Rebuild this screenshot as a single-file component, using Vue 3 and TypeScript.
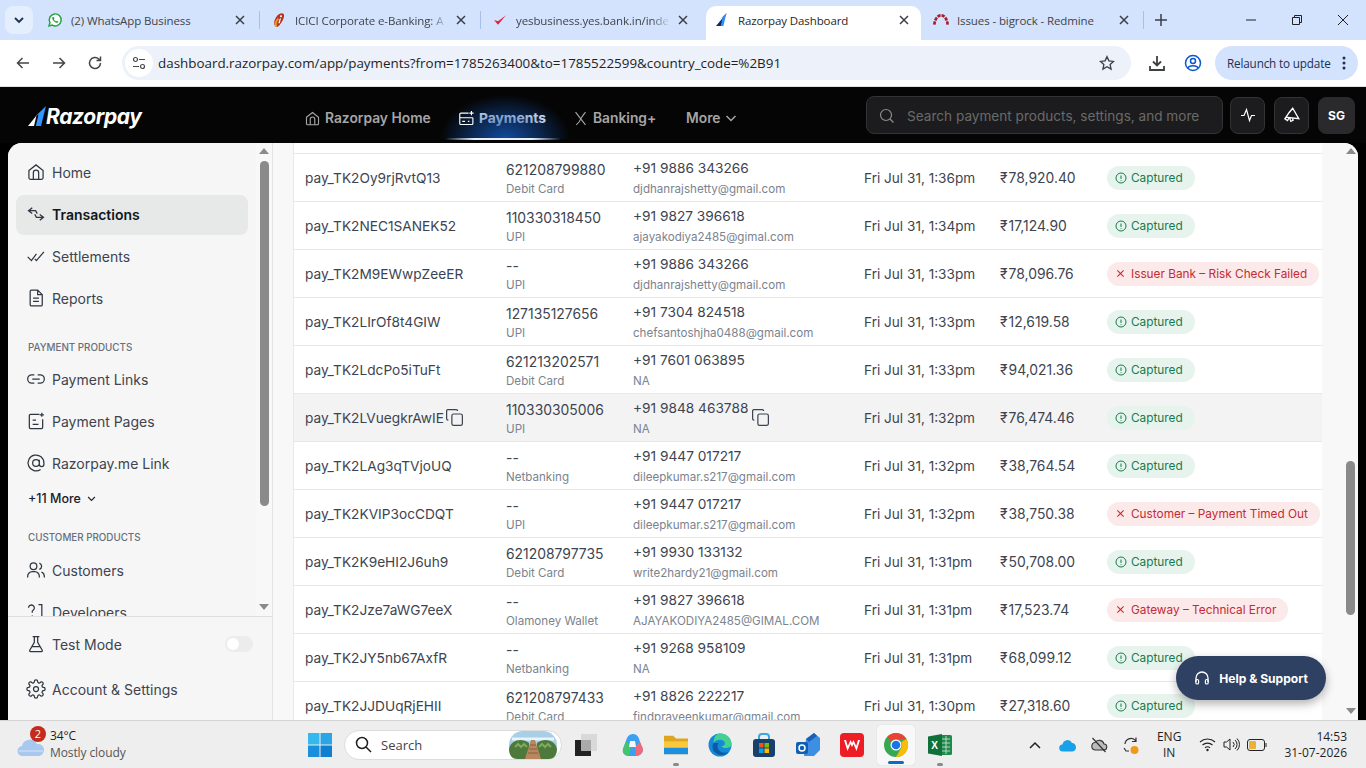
<script setup lang="ts">
interface Tab { title: string; width: number; icon: string; active?: boolean; sep?: boolean; fade?: boolean }
const tabs: Tab[] = [
  { title: '(2) WhatsApp Business', width: 224, icon: 'wa', sep: true },
  { title: 'ICICI Corporate e-Banking: A', width: 221, icon: 'icici', sep: true, fade: true },
  { title: 'yesbusiness.yes.bank.in/inde', width: 222, icon: 'yes', fade: true },
  { title: 'Razorpay Dashboard', width: 215, icon: 'rzp', active: true },
  { title: 'Issues - bigrock - Redmine', width: 222, icon: 'red', sep: true }
]
interface Nav { label: string; d: string; active?: boolean }
const icons = {
  home: 'M3.500 10.200 12 3.500l8.500 6.700V19a1.800 1.800 0 0 1-1.800 1.800H5.300A1.800 1.800 0 0 1 3.500 19ZM8.800 20.800V13a3.200 3.200 0 0 1 6.400 0v7.800',
  tx: 'M7.500 4.500 3 8l4.500 3.500M3 8h8.500l2 3.500M16.500 12.500 21 16l-4.500 3.500M21 16h-8.500l-2-3.500',
  settle: 'M2 13l4.500 4.500 6-8M10.500 15.500l2 2 9-10.500',
  report: 'M5 4a1.500 1.500 0 0 1 1.500-1.500H14L19.500 8v12a1.500 1.500 0 0 1-1.500 1.500H6.500A1.500 1.500 0 0 1 5 20ZM14 2.500V8h5.500M8.500 12h7M8.500 16h7',
  link: 'M10 7H7a5 5 0 0 0 0 10h3M14 7h3a5 5 0 0 1 0 10h-3M7.500 12h9',
  page: 'M16 4H5.500A1.500 1.500 0 0 0 4 5.500v14A1.500 1.500 0 0 0 5.500 21h13a1.500 1.500 0 0 0 1.500-1.500V10M8 11h4M8 16h7M19 2v5M16.500 4.500h5',
  at: 'M16 12a4 4 0 1 1-8 0 4 4 0 0 1 8 0ZM16 8v5.500a2.700 2.700 0 0 0 5.500 0V12a9.500 9.500 0 1 0-4 7.700',
  users: 'M13 7.500a4 4 0 1 1-8 0 4 4 0 0 1 8 0ZM2 21v-1.500A5.500 5.500 0 0 1 7.500 14h3a5.500 5.500 0 0 1 5.500 5.500V21M16 3.700a4 4 0 0 1 0 7.600M22 21v-1.500a5.500 5.500 0 0 0-3.500-5.100',
  dev: 'M3 7a3.500 3.500 0 1 1 5.500 3l-1 1v2M7.500 16v.5M15 3h4v18M15 21h7',
  flask: 'M8 3h8M10 3v7L4.500 19.500A1 1 0 0 0 5.400 21h13.200a1 1 0 0 0 .9-1.500L14 10V3M7.500 15h9',
  gear: 'M12 15a3 3 0 1 0 0-6 3 3 0 0 0 0 6ZM19.400 15a1.700 1.700 0 0 0 .3 1.800l.1.100a2 2 0 1 1-2.800 2.800l-.1-.1a1.700 1.700 0 0 0-2.900 1.200V21a2 2 0 0 1-4 0v-.1a1.700 1.700 0 0 0-2.900-1.200l-.1.100a2 2 0 1 1-2.800-2.800l.1-.1a1.700 1.700 0 0 0-1.200-2.900H3a2 2 0 0 1 0-4h.1a1.700 1.700 0 0 0 1.200-2.900l-.1-.1a2 2 0 1 1 2.800-2.800l.1.100a1.700 1.700 0 0 0 2.900-1.200V3a2 2 0 0 1 4 0v.1a1.700 1.700 0 0 0 2.900 1.200l.1-.1a2 2 0 1 1 2.800 2.800l-.1.100a1.700 1.700 0 0 0 1.200 2.900h.1a2 2 0 0 1 0 4h-.1a1.700 1.700 0 0 0-1.500 1Z',
  payments: 'M15 4.500H4A1.500 1.500 0 0 0 2.500 6v13A1.500 1.500 0 0 0 4 20.500h15.500A1.500 1.500 0 0 0 21 19v-8M2.500 11H21M6 16h4M14 16h2M19 1.500v6M16 4.500h6',
  banking: 'M5 3l14 18M19 3c-3 4-5.500 7-6.500 9.500-1 2.500-3.500 6-6.500 8.500'
}
const mainNav: Nav[] = [
  { label: 'Home', d: icons.home },
  { label: 'Transactions', d: icons.tx, active: true },
  { label: 'Settlements', d: icons.settle },
  { label: 'Reports', d: icons.report }
]
const payProducts: Nav[] = [
  { label: 'Payment Links', d: icons.link },
  { label: 'Payment Pages', d: icons.page },
  { label: 'Razorpay.me Link', d: icons.at }
]
const custProducts: Nav[] = [
  { label: 'Customers', d: icons.users },
  { label: 'Developers', d: icons.dev }
]
interface Row { id: string; ref: string; method: string; phone: string; mail: string; date: string; amount: string; status: string; fail?: boolean; hover?: boolean }
const C = 'Captured'
const rows: Row[] = [
  { id: 'pay_TK2Oy9rjRvtQ13', ref: '621208799880', method: 'Debit Card', phone: '+91 9886 343266', mail: 'djdhanrajshetty@gmail.com', date: 'Fri Jul 31, 1:36pm', amount: '78,920.40', status: C },
  { id: 'pay_TK2NEC1SANEK52', ref: '110330318450', method: 'UPI', phone: '+91 9827 396618', mail: 'ajayakodiya2485@gimal.com', date: 'Fri Jul 31, 1:34pm', amount: '17,124.90', status: C },
  { id: 'pay_TK2M9EWwpZeeER', ref: '--', method: 'UPI', phone: '+91 9886 343266', mail: 'djdhanrajshetty@gmail.com', date: 'Fri Jul 31, 1:33pm', amount: '78,096.76', status: 'Issuer Bank – Risk Check Failed', fail: true },
  { id: 'pay_TK2LIrOf8t4GIW', ref: '127135127656', method: 'UPI', phone: '+91 7304 824518', mail: 'chefsantoshjha0488@gmail.com', date: 'Fri Jul 31, 1:33pm', amount: '12,619.58', status: C },
  { id: 'pay_TK2LdcPo5iTuFt', ref: '621213202571', method: 'Debit Card', phone: '+91 7601 063895', mail: 'NA', date: 'Fri Jul 31, 1:33pm', amount: '94,021.36', status: C },
  { id: 'pay_TK2LVuegkrAwIE', ref: '110330305006', method: 'UPI', phone: '+91 9848 463788', mail: 'NA', date: 'Fri Jul 31, 1:32pm', amount: '76,474.46', status: C, hover: true },
  { id: 'pay_TK2LAg3qTVjoUQ', ref: '--', method: 'Netbanking', phone: '+91 9447 017217', mail: 'dileepkumar.s217@gmail.com', date: 'Fri Jul 31, 1:32pm', amount: '38,764.54', status: C },
  { id: 'pay_TK2KVIP3ocCDQT', ref: '--', method: 'UPI', phone: '+91 9447 017217', mail: 'dileepkumar.s217@gmail.com', date: 'Fri Jul 31, 1:32pm', amount: '38,750.38', status: 'Customer – Payment Timed Out', fail: true },
  { id: 'pay_TK2K9eHI2J6uh9', ref: '621208797735', method: 'Debit Card', phone: '+91 9930 133132', mail: 'write2hardy21@gmail.com', date: 'Fri Jul 31, 1:31pm', amount: '50,708.00', status: C },
  { id: 'pay_TK2Jze7aWG7eeX', ref: '--', method: 'Olamoney Wallet', phone: '+91 9827 396618', mail: 'AJAYAKODIYA2485@GIMAL.COM', date: 'Fri Jul 31, 1:31pm', amount: '17,523.74', status: 'Gateway – Technical Error', fail: true },
  { id: 'pay_TK2JY5nb67AxfR', ref: '--', method: 'Netbanking', phone: '+91 9268 958109', mail: 'NA', date: 'Fri Jul 31, 1:31pm', amount: '68,099.12', status: C },
  { id: 'pay_TK2JJDUqRjEHII', ref: '621208797433', method: 'Debit Card', phone: '+91 8826 222217', mail: 'findpraveenkumar@gmail.com', date: 'Fri Jul 31, 1:30pm', amount: '27,318.60', status: C }
]
</script>

<template>
  <div class="screen">
    <!-- tab strip -->
    <div class="tabstrip">
      <div class="tab-search"><svg width="12" height="12" viewBox="0 0 12 12"><path d="M2 4l4 4 4-4" fill="none" stroke="#1f2f4d" stroke-width="1.800"/></svg></div>
      <div v-for="t in tabs" :key="t.title" class="tab" :class="{ active: t.active, sep: t.sep }" :style="{ width: t.width + 'px' }">
        <svg v-if="t.icon === 'wa'" class="fav" viewBox="0 0 24 24"><path d="M3 21l1.400-5A9 9 0 1 1 8 19.700Z" fill="#fff" stroke="#25a244" stroke-width="2.200"/><path d="M8.500 7.500c-1 1-1 2.500.3 4.500s3.500 4 5.500 4.300c1.500.2 2.500-.8 2.700-2l-2.300-1.200-1 1.200c-1.500-.6-2.700-1.800-3.500-3.300l.9-1.100-1-2.400Z" fill="#25a244"/></svg>
        <svg v-else-if="t.icon === 'icici'" class="fav" viewBox="0 0 24 24"><path d="M8 22C3 20 4 12 9 6c3-4 8-5 10-3 2 3-1 10-5 15-2 3-4 5-6 4Z" fill="#b5361c"/><path d="M8 22c-2-4 0-9 3-12" fill="none" stroke="#f0962a" stroke-width="3"/><path d="M13 10l2-1-2 8h-2Z" fill="#fff"/><circle cx="15" cy="6.500" r="1.500" fill="#fff"/></svg>
        <svg v-else-if="t.icon === 'yes'" class="fav" viewBox="0 0 24 24"><path d="M3 12l6 7L21 5 9 14Z" fill="#e3213f"/></svg>
        <svg v-else-if="t.icon === 'rzp'" class="fav" viewBox="0 0 24 24"><path d="M14 8 11 21H3Z" fill="#0b2a6b"/><path d="M19 1l-5 20h-4l3-13-4 3Z" fill="#2f8cf0"/></svg>
        <svg v-else class="fav" viewBox="0 0 24 24"><path d="M2 19C3 9 8 5 12 5s9 4 10 14" fill="none" stroke="#a81d2a" stroke-width="4" stroke-dasharray="5 1.500"/></svg>
        <span class="tab-title" :class="{ fade: t.fade }">{{ t.title }}</span>
        <svg class="tab-x" width="10" height="10" viewBox="0 0 10 10"><path d="M1 1l8 8M9 1 1 9" stroke="#3a3f47" stroke-width="1.500"/></svg>
      </div>
      <svg class="plus" width="14" height="14" viewBox="0 0 14 14"><path d="M7 1v12M1 7h12" stroke="#3a3f47" stroke-width="1.500"/></svg>
      <div class="winctl">
        <svg width="12" height="12" viewBox="0 0 12 12"><path d="M1 6h10" stroke="#222" stroke-width="1"/></svg>
        <svg width="12" height="12" viewBox="0 0 12 12"><path d="M1.500 3.500h7v7h-7ZM3.500 3.500v-2h7v7h-2" fill="none" stroke="#222" stroke-width="1"/></svg>
        <svg width="12" height="12" viewBox="0 0 12 12"><path d="M1 1l10 10M11 1 1 11" stroke="#222" stroke-width="1"/></svg>
      </div>
    </div>

    <!-- toolbar -->
    <div class="toolbar">
      <svg class="tb-ic" viewBox="0 0 16 16"><path d="M14 8H2.500M7.500 3 2.500 8l5 5" fill="none" stroke="#444746" stroke-width="1.500"/></svg>
      <svg class="tb-ic" viewBox="0 0 16 16"><path d="M2 8h11.500M8.500 3l5 5-5 5" fill="none" stroke="#444746" stroke-width="1.500"/></svg>
      <svg class="tb-ic" viewBox="0 0 16 16"><path d="M13.500 8a5.500 5.500 0 1 1-1.700-4L13.500 5.500M13.500 1.500v4h-4" fill="none" stroke="#444746" stroke-width="1.500"/></svg>
      <div class="urlbar">
        <span class="tune"><svg width="14" height="14" viewBox="0 0 14 14"><circle cx="3.500" cy="3.500" r="2" fill="none" stroke="#444746" stroke-width="1.200"/><path d="M7 3.500h6M1 10.500h6" stroke="#444746" stroke-width="1.200"/><circle cx="10.500" cy="10.500" r="2" fill="none" stroke="#444746" stroke-width="1.200"/></svg></span>
        <span class="url">dashboard.razorpay.com/app/payments?from=1785263400&amp;to=1785522599&amp;country_code=%2B91</span>
        <svg class="star" width="16" height="16" viewBox="0 0 24 24"><path d="M12 2.500l2.900 6.300 6.900.8-5.100 4.700 1.400 6.800-6.100-3.500-6.100 3.500 1.400-6.800L2.200 9.600l6.900-.8Z" fill="none" stroke="#3c4043" stroke-width="2"/></svg>
      </div>
      <svg class="dl" width="18" height="18" viewBox="0 0 18 18"><path d="M9 2v9M5 7.500 9 11.500l4-4M2 12v4h14v-4" fill="none" stroke="#3c4043" stroke-width="1.800"/></svg>
      <svg class="prof" width="18" height="18" viewBox="0 0 18 18"><circle cx="9" cy="9" r="7.500" fill="none" stroke="#0b57d0" stroke-width="1.500"/><circle cx="9" cy="7" r="2.500" fill="none" stroke="#0b57d0" stroke-width="1.500"/><path d="M4 14c1-3 9-3 10 0" fill="none" stroke="#0b57d0" stroke-width="1.500"/></svg>
      <div class="relaunch"><span>Relaunch to update</span><svg width="4" height="14" viewBox="0 0 4 14"><circle cx="2" cy="2" r="1.500" fill="#1f2f4d"/><circle cx="2" cy="7" r="1.500" fill="#1f2f4d"/><circle cx="2" cy="12" r="1.500" fill="#1f2f4d"/></svg></div>
    </div>

    <!-- app -->
    <div class="app">
      <header class="topnav">
        <div class="logo">
          <svg width="18" height="20" viewBox="0 0 18 20"><path d="M8.500 9.500 6 20H0Z" fill="#fff"/><path d="M18 0 13 20H7.800l2.700-11.500-4 2.700Z" fill="#3395ff"/></svg>
          <span>Razorpay</span>
        </div>
        <div class="nav-links">
          <div class="nl w1"><svg class="nli" viewBox="0 0 24 24"><path :d="icons.home"/></svg>Razorpay Home</div>
          <div class="nl on w2"><svg class="nli" viewBox="0 0 24 24"><path :d="icons.payments"/></svg>Payments</div>
          <div class="nl w3"><svg class="nli" viewBox="0 0 24 24"><path :d="icons.banking"/></svg>Banking+</div>
          <div class="nl">More <svg class="chev" viewBox="0 0 12 12"><path d="M1.500 4 6 8.500 10.500 4"/></svg></div>
        </div>
        <div class="top-right">
          <div class="search">
            <svg width="16" height="16" viewBox="0 0 16 16"><circle cx="7" cy="7" r="5.500" fill="none" stroke="#8c8c8c" stroke-width="1.200"/><path d="M11 11l3.500 3.500" stroke="#8c8c8c" stroke-width="1.200"/></svg>
            <span>Search payment products, settings, and more</span>
          </div>
          <div class="sq"><svg width="16" height="16" viewBox="0 0 16 16"><path d="M1 8.500h3l2.500-6 3 11 2-5h3.500" fill="none" stroke="#fff" stroke-width="1.200"/></svg></div>
          <div class="sq"><svg width="18" height="18" viewBox="0 0 24 24"><path d="M13 3 21 17 4 15l4-6ZM4 15l-1.500 2L6 19.500 8 16M9 16.500l1.500 4 3-1.500-1-3" fill="none" stroke="#fff" stroke-width="1.800"/></svg></div>
          <div class="sq avatar">SG</div>
        </div>
      </header>

      <div class="body">
        <aside class="sidebar">
          <div class="side-top">
            <div class="side-scroll">
              <div class="side-inner">
                <a v-for="n in mainNav" :key="n.label" class="item" :class="{ cur: n.active }"><svg class="ii" viewBox="0 0 24 24"><path :d="n.d"/></svg>{{ n.label }}</a>
                <div class="grp first">PAYMENT PRODUCTS</div>
                <a v-for="n in payProducts" :key="n.label" class="item"><svg class="ii" viewBox="0 0 24 24"><path :d="n.d"/></svg>{{ n.label }}</a>
                <div class="more">+11 More <svg width="9" height="9" viewBox="0 0 12 12"><path d="M1.500 4 6 8.500 10.500 4" fill="none" stroke="#222" stroke-width="1.500"/></svg></div>
                <div class="grp second">CUSTOMER PRODUCTS</div>
                <a v-for="n in custProducts" :key="n.label" class="item"><svg class="ii" viewBox="0 0 24 24"><path :d="n.d"/></svg>{{ n.label }}</a>
              </div>
            </div>
            <div class="vbar side-bar">
              <i class="arrow up"></i>
              <b class="thumb"></b>
              <i class="arrow down"></i>
            </div>
          </div>
          <div class="side-bottom">
            <a class="item plain"><svg class="ii" viewBox="0 0 24 24"><path :d="icons.flask"/></svg>Test Mode<span class="toggle"><em></em></span></a>
            <a class="item plain"><svg class="ii" viewBox="0 0 24 24"><path :d="icons.gear"/></svg>Account &amp; Settings</a>
          </div>
        </aside>

        <div class="gutter"></div>

        <main class="table">
          <div class="rows">
            <div class="row cut">
              <div class="c-id"></div>
              <div class="w-ref"><span class="sub peek">UPI</span></div>
              <div class="w-phone"><span class="sub peek">NA</span></div>
            </div>
            <div v-for="r in rows" :key="r.id" class="row" :class="{ hover: r.hover }">
              <div class="c-id">{{ r.id }}<svg v-if="r.hover" class="copy" viewBox="0 0 24 24"><path d="M9 10a2 2 0 0 1 2-2h8a2 2 0 0 1 2 2v9a2 2 0 0 1-2 2h-8a2 2 0 0 1-2-2ZM5 15H4.500A1.500 1.500 0 0 1 3 13.500v-9A1.500 1.500 0 0 1 4.500 3H14a1.500 1.500 0 0 1 1.500 1.500"/></svg></div>
              <div class="stack w-ref"><span class="main-t t-ref">{{ r.ref }}</span><span class="sub">{{ r.method }}</span></div>
              <div class="stack w-phone">
                <span class="main-t t-ph">{{ r.phone }}</span><span class="sub">{{ r.mail }}</span>
                <svg v-if="r.hover" class="copy over" viewBox="0 0 24 24"><path d="M9 10a2 2 0 0 1 2-2h8a2 2 0 0 1 2 2v9a2 2 0 0 1-2 2h-8a2 2 0 0 1-2-2ZM5 15H4.500A1.500 1.500 0 0 1 3 13.500v-9A1.500 1.500 0 0 1 4.500 3H14a1.500 1.500 0 0 1 1.500 1.500"/></svg>
              </div>
              <div class="w-date">{{ r.date }}</div>
              <div class="w-amt"><span class="rupee">₹</span>{{ r.amount }}</div>
              <div class="pill" :class="r.fail ? 'bad' : 'good'">
                <svg v-if="r.fail" width="9" height="9" viewBox="0 0 10 10"><path d="M1.500 1.500l7 7M8.500 1.500l-7 7" stroke="#c62a33" stroke-width="1.200"/></svg>
                <svg v-else width="12" height="12" viewBox="0 0 12 12"><circle cx="6" cy="6" r="5" fill="none" stroke="#177a4b" stroke-width="1"/><path d="M6 3.500v3.500M6 8.300v.8" stroke="#177a4b" stroke-width="1"/></svg>
                <span>{{ r.status }}</span>
              </div>
            </div>
          </div>
        </main>

        <div class="gutter right"></div>
        <div class="vbar main-bar">
          <i class="arrow up"></i>
          <b class="thumb"></b>
          <i class="arrow down"></i>
        </div>

        <div class="help">
          <svg width="16" height="16" viewBox="0 0 16 16"><path d="M2 12V8a6 6 0 0 1 12 0v4" fill="none" stroke="#fff" stroke-width="1.300"/><rect x="1.800" y="9.500" width="2.800" height="4.500" rx="1.300" fill="none" stroke="#fff" stroke-width="1.200"/><rect x="11.400" y="9.500" width="2.800" height="4.500" rx="1.300" fill="none" stroke="#fff" stroke-width="1.200"/></svg>
          <span>Help &amp; Support</span>
        </div>
      </div>
    </div>

    <!-- taskbar -->
    <footer class="taskbar">
      <div class="weather">
        <div class="cloud">
          <svg width="28" height="26" viewBox="0 0 28 26"><path d="M6 24a5 5 0 0 1-1-10 8 8 0 0 1 15-2 6 6 0 0 1 2 12Z" fill="#a9c8ef"/><path d="M2 19h24" stroke="#d6e6f8" stroke-width="1"/></svg>
          <span class="badge">2</span>
        </div>
        <div class="wtxt"><span>34°C</span><span class="gray">Mostly cloudy</span></div>
      </div>
      <div class="center">
        <svg class="winlogo" width="24" height="24" viewBox="0 0 24 24"><rect width="11.500" height="11.500" fill="#35b8ee"/><rect x="12.500" width="11.500" height="11.500" fill="#2aa5e6"/><rect y="12.500" width="11.500" height="11.500" fill="#1a8fdc"/><rect x="12.500" y="12.500" width="11.500" height="11.500" fill="#0f7fd0"/></svg>
        <div class="tsearch">
          <svg width="17" height="17" viewBox="0 0 17 17"><circle cx="7" cy="7" r="5.500" fill="none" stroke="#1f1f1f" stroke-width="1.500"/><path d="M11 11l5 5" stroke="#1f1f1f" stroke-width="1.500"/></svg>
          <span>Search</span>
          <svg class="pic" width="48" height="28" viewBox="0 0 48 28"><rect width="48" height="28" rx="14" fill="#a8cfe8"/><path d="M3 8h42" stroke="#e8f3fa" stroke-width="3"/><path d="M0 18C2 8 14 7 20 12v16H8C3 28 0 24 0 18ZM48 18C46 8 34 7 28 12v16h12c5 0 8-4 8-10Z" fill="#4d7a3c"/><path d="M6 16l3-3 3 3 3-3 3 3M30 16l3-3 3 3 3-3 3 3" stroke="#7fa85a" stroke-width="2" fill="none"/><path d="M22 9h4l6 19H16Z" fill="#b9875f"/><path d="M21 14h6M20 18h8M19 22h10" stroke="#8c5f3f"/></svg>
        </div>
        <svg class="ti task" viewBox="0 0 24 24"><rect x="7" y="1" width="16" height="17" fill="#d9d9d9"/><rect x="1" y="7" width="16" height="16" fill="#222"/><rect x="7" y="7" width="10" height="11" fill="#aaa"/></svg>
        <svg class="ti" viewBox="0 0 24 24"><path d="M13 1c4 0 6 3 7 8l3 7c0 4-3 7-7 7H9c-4 0-7-3-6-7l3-8c1-4 3-7 7-7Z" fill="#3aa0f0"/><path d="M9 23c-4 0-7-3-6-7l3-8 5 6-2 9Z" fill="#43c46f"/><path d="M16 23c4 0 7-3 7-7l-3-7-5 5 1 9Z" fill="#f06a7a"/><path d="M10 8h5l1 6h-7Z" fill="#f7f7f7"/></svg>
        <span class="with-dot"><svg class="ti" viewBox="0 0 26 24"><path d="M0 2h10l3 3h13v4H0Z" fill="#e0a520"/><path d="M0 8h26v14H0Z" fill="#f9c93b"/><path d="M0 15h26v7H0Z" fill="#1d8fe0"/></svg><i class="dot"></i></span>
        <svg class="ti" viewBox="0 0 24 24"><circle cx="12" cy="12" r="11.500" fill="#1688d8"/><path d="M12 .5c7 0 11.500 5 11.500 10.500 0 3-3 4-6 4-3.500 0-4-2-4-2 3 0 4-2 3-4-2-3-8-3-11 1C6 4 8 .5 12 .5Z" fill="#43d18f"/><path d="M5.500 10c-3 5 1 12 8 12 3 0 5-1 7-3-5 2-11 0-11-6 0-1 .5-2 1-3Z" fill="#0c59a4"/></svg>
        <svg class="ti" viewBox="0 0 24 24"><path d="M7 7V4a3 3 0 0 1 3-3h4a3 3 0 0 1 3 3v3" fill="none" stroke="#3aa7e0" stroke-width="2"/><rect x="1" y="6" width="22" height="18" rx="3" fill="#19406b"/><rect x="7" y="10" width="4.500" height="4.500" fill="#f25022"/><rect x="12.500" y="10" width="4.500" height="4.500" fill="#7fba00"/><rect x="7" y="15.500" width="4.500" height="4.500" fill="#00a4ef"/><rect x="12.500" y="15.500" width="4.500" height="4.500" fill="#ffb900"/></svg>
        <svg class="ti" viewBox="0 0 24 24"><path d="M10 6 18 0l6 5v12l-6 6H8Z" fill="#3c8fe4"/><path d="M10 6l8-6 3 3-8 6Z" fill="#1d5fb5"/><rect x="0" y="9" width="12" height="12" rx="2" fill="#0f5fb3"/><circle cx="6" cy="15" r="3" fill="none" stroke="#fff" stroke-width="1.500"/></svg>
        <svg class="ti" viewBox="0 0 24 24"><rect width="24" height="24" rx="4" fill="#ee1c25"/><path d="M4 7l3.500 11 3-7 1.500 3 1.500-3 3 7L20 7l-2 0-1.800 6-2.700-6L12 10l-1.500-3-2.700 6L6 7Z" fill="#fff"/></svg>
        <span class="chrome-wrap"><svg class="ti" viewBox="0 0 24 24"><circle cx="12" cy="12" r="12" fill="#34a853"/><path d="M12 0a12 12 0 0 1 10.400 6H12a6 6 0 0 0-5.200 3L3.500 3.500A12 12 0 0 1 12 0Z" fill="#ea4335"/><path d="M22.400 6A12 12 0 0 1 12 24l5.200-9a6 6 0 0 0 0-6Z" fill="#fbbc04"/><circle cx="12" cy="12" r="5.500" fill="#fff"/><circle cx="12" cy="12" r="4.300" fill="#1a73e8"/></svg><i class="active-bar"></i></span>
        <span class="with-dot"><svg class="ti" viewBox="0 0 24 24"><rect x="8" y="2" width="16" height="20" rx="1.500" fill="#1f8a4c"/><path d="M14 6h8M14 10h8M14 14h8M14 18h8M18 3v18" stroke="#d6eadf" stroke-width=".8"/><path d="M0 3.500 14 1v22L0 20.500Z" fill="#10703a"/><text x="3.200" y="16" font-size="10" font-weight="700" fill="#fff" font-family="Liberation Sans, sans-serif">X</text></svg><i class="dot"></i></span>
      </div>
      <div class="tray">
        <svg class="t-chev" width="14" height="10" viewBox="0 0 14 10"><path d="M2 8l5-5 5 5" fill="none" stroke="#222" stroke-width="1.500"/></svg>
        <svg class="t-one" width="18" height="14" viewBox="0 0 18 14"><path d="M4 13.500a3.500 3.500 0 0 1-.5-7A5 5 0 0 1 13 5a4.300 4.300 0 0 1 .5 8.500Z" fill="#18a0e8"/></svg>
        <svg class="t-off" width="18" height="18" viewBox="0 0 18 18"><path d="M5 14h8.500a3 3 0 0 0 .5-6 5 5 0 0 0-9-1.500A3.800 3.800 0 0 0 5 14Z" fill="#bbb" stroke="#333" stroke-width="1.100"/><path d="M2.500 2l13 14" stroke="#333" stroke-width="1.200"/></svg>
        <svg class="t-off" width="18" height="20" viewBox="0 0 18 20"><path d="M3 9a6 6 0 0 1 10-4l1 1M14 2.500V6.500h-4M2 13l2 3h3" fill="none" stroke="#333" stroke-width="1.200"/><circle cx="12.500" cy="15" r="4" fill="#f09a1a"/></svg>
        <div class="lang"><span>ENG</span><span>IN</span></div>
        <svg class="t-wifi" width="17" height="15" viewBox="0 0 17 15"><path d="M1 5a11 11 0 0 1 15 0M3.500 8a7.500 7.500 0 0 1 10 0M6 10.800a3.500 3.500 0 0 1 5 0" fill="none" stroke="#222" stroke-width="1.100"/><circle cx="8.500" cy="13" r="1.200" fill="#222"/></svg>
        <svg class="t-snd" width="17" height="15" viewBox="0 0 17 15"><path d="M1 5h2.500L7 2v11L3.500 10H1ZM10 5a3.500 3.500 0 0 1 0 5M12 3a6 6 0 0 1 0 9M14 1.500a8.500 8.500 0 0 1 0 12" fill="none" stroke="#222" stroke-width="1"/></svg>
        <svg class="t-bat" width="20" height="12" viewBox="0 0 20 12"><rect x=".5" y=".5" width="17" height="11" rx="2.500" fill="none" stroke="#222"/><rect x="2" y="2" width="7" height="8" rx="1" fill="#e9b23a"/><path d="M19 4v4" stroke="#222"/></svg>
        <div class="clock"><span>14:53</span><span>31-07-2026</span></div>
      </div>
    </footer>
  </div>
</template>

<style>
html, body { margin: 0; background: #000; overflow: hidden; }
</style>

<style scoped>
.screen { width: 1366px; height: 768px; display: flex; flex-direction: column; overflow: hidden; font-family: Inter, "Liberation Sans", sans-serif; }

/* tabs */
.tabstrip { height: 40px; background: #d3e3fd; display: flex; align-items: flex-end; padding-left: 5px; font-family: "Open Sans", "Noto Sans", sans-serif; flex: none; }
.tab-search { width: 28px; height: 28px; margin: 0 6px 6px 0; border-radius: 8px; background: #e4eefd; display: flex; align-items: center; justify-content: center; }
.tab { height: 34px; box-sizing: border-box; display: flex; align-items: center; padding: 0 18px 6px 8px; gap: 8px; font-size: 11.500px; color: #3f444a; position: relative; flex: none; letter-spacing: -.1px; }
.tab.active { background: #fff; border-radius: 10px 10px 0 0; color: #1f1f1f; padding-right: 12px; margin-right: 4px; }
.tab.sep::after { content: ""; position: absolute; right: 3px; top: 5px; height: 18px; width: 1px; background: #a8c0e6; }
.fav { width: 16px; height: 16px; flex: none; }
.tab-title { flex: 1; white-space: nowrap; overflow: hidden; min-width: 0; }
.tab-title.fade { -webkit-mask-image: linear-gradient(90deg, #000 calc(100% - 18px), transparent); mask-image: linear-gradient(90deg, #000 calc(100% - 18px), transparent); }
.tab-x { flex: none; }
.plus { margin: 0 0 13px 7px; flex: none; }
.winctl { margin-left: auto; display: flex; gap: 34px; padding: 0 17px 14px 0; }

/* toolbar */
.toolbar { height: 47px; background: #fff; display: flex; align-items: center; padding: 0 0 0 15px; border-bottom: 1px solid #e2e2e2; flex: none; box-sizing: border-box; font-family: "Open Sans", "Noto Sans", sans-serif; }
.tb-ic { width: 16px; height: 16px; margin-right: 20px; flex: none; }
.urlbar { width: 1009px; height: 34px; margin-left: -1px; background: #ecf1fa; border-radius: 17px; display: flex; align-items: center; flex: none; box-sizing: border-box; padding: 0 16px 0 3px; }
.tune { width: 28px; height: 28px; border-radius: 50%; background: #fff; display: flex; align-items: center; justify-content: center; margin-right: 5px; }
.url { font-size: 13.400px; color: #1f1f1f; flex: 1; white-space: nowrap; }
.star { flex: none; }
.dl { margin-left: 17px; flex: none; }
.prof { margin-left: 18px; flex: none; }
.relaunch { margin-left: 13px; width: 143px; height: 34px; border-radius: 17px; background: #d3e3fd; display: flex; align-items: center; gap: 11px; padding-left: 12px; box-sizing: border-box; font-size: 11.700px; color: #1f2f4d; white-space: nowrap; flex: none; letter-spacing: -.15px; }

/* app */
.app { flex: 1; min-height: 0; background: #000; display: flex; flex-direction: column; }
.topnav { height: 56px; flex: none; display: flex; align-items: center; background: #050505; position: relative; }
.logo { display: flex; align-items: center; margin-left: 28px; width: 277px; flex: none; padding-top: 2px; box-sizing: border-box; height: 26px; }
.logo span { font-size: 21px; font-weight: 700; font-style: italic; color: #fff; letter-spacing: -.4px; }
.nav-links { display: flex; align-items: center; height: 100%; }
.nl { display: flex; align-items: center; gap: 4px; font-size: 13.800px; font-weight: 600; color: #a6a6a6; white-space: nowrap; height: 100%; box-sizing: border-box; padding-top: 6px; position: relative; }
.w1 { width: 154px; }
.w2 { width: 114px; }
.w3 { width: 113px; }
.nl.on { color: #fff; font-weight: 700; }
.nl.on::before { content: ""; position: absolute; left: -19px; top: 0; width: 130px; height: 52px; background: radial-gradient(ellipse 50% 85% at 50% 100%, rgba(18, 78, 165, .95), rgba(18, 78, 165, .45) 55%, rgba(18, 78, 165, 0) 100%); }
.nl.on::after { content: ""; position: absolute; left: -14px; width: 116px; top: 51px; height: 1.500px; background: linear-gradient(90deg, rgba(255, 255, 255, 0), #e6eefb 25%, #e6eefb 75%, rgba(255, 255, 255, 0)); }
.nli { width: 17px; height: 17px; margin-left: -1px; fill: none; stroke: currentColor; stroke-width: 1.600; position: relative; flex: none; }
.chev { width: 12px; height: 12px; fill: none; stroke: #a6a6a6; stroke-width: 1.500; margin-left: 1px; }
.top-right { margin-left: auto; display: flex; align-items: center; padding-right: 11px; }
.search { width: 357px; height: 38px; box-sizing: border-box; background: #1c1c1e; border: 1px solid #333; border-radius: 8px; display: flex; align-items: center; gap: 12px; padding: 1px 0 0 12px; font-size: 13.600px; color: #6a6a6a; margin-right: 7px; white-space: nowrap; }
.sq { width: 35px; height: 37px; box-sizing: border-box; border: 1px solid #333; background: #1c1c1e; border-radius: 8px; display: flex; align-items: center; justify-content: center; margin-right: 9px; }
.sq:last-child { margin-right: 0; width: 37px; background: #2a2a2c; border-color: #2a2a2c; }
.avatar { color: #fff; font-size: 12px; font-weight: 700; }

.body { flex: 1; min-height: 0; display: flex; position: relative; margin: 0 8px; background: #fff; border-radius: 14px 14px 0 0; overflow: hidden; }
.sidebar { width: 265px; flex: none; background: #f6f6f6; border-right: 1px solid #e3e3e3; display: flex; flex-direction: column; box-sizing: border-box; }
.side-top { height: 473px; display: flex; flex: none; border-bottom: 1px solid #dedede; overflow: hidden; }
.side-scroll { width: 248px; flex: none; overflow: hidden; }
.side-inner { padding: 10px 8px 0; }
.item { display: flex; align-items: center; height: 40px; margin-bottom: 2px; padding: 0 0 2px 10px; gap: 6px; border-radius: 8px; font-size: 14px; color: #3d4450; position: relative; box-sizing: border-box; }
.item.cur { background: #e7e8e8; color: #0f1720; font-weight: 600; }
.ii { width: 20px; height: 20px; fill: none; stroke: #2f3640; stroke-width: 1.500; flex: none; }
.grp { font-size: 9.800px; color: #67707c; padding-left: 12px; height: 12px; line-height: 12px; font-weight: 500; }
.grp.first { margin: 23px 0 6px; }
.grp.second { margin: 0 0 7px; }
.more { padding-left: 12px; display: flex; align-items: center; gap: 6px; height: 14px; font-size: 12.500px; font-weight: 500; color: #1a2029; margin: 7px 0 27px; }
.vbar { display: flex; flex-direction: column; align-items: center; flex: none; background: #f8f8f8; }
.side-bar { width: 16px; }
.arrow { display: block; width: 0; height: 0; border-left: 5px solid transparent; border-right: 5px solid transparent; flex: none; }
.arrow.up { border-bottom: 6px solid #8a8a8a; }
.arrow.down { border-top: 6px solid #8a8a8a; margin-top: auto; margin-bottom: 6px; }
.side-bar .arrow.up { margin-top: 5px; }
.side-bar .thumb { display: block; width: 9px; height: 345px; background: #8a8a8a; border-radius: 5px; margin-top: 7px; flex: none; }
.side-bottom { flex: 1; padding-top: 8px; }
.item.plain { margin: 0 8px 5px; height: 40px; }
.toggle { margin-left: auto; margin-right: 11px; width: 28px; height: 16px; border-radius: 8px; background: #ececec; display: flex; align-items: center; padding-left: 2px; box-sizing: border-box; }
.toggle em { width: 12px; height: 12px; background: #fff; border-radius: 50%; display: block; }

.gutter { width: 20px; flex: none; background: #f8f8f8; }
.gutter.right { width: 21px; }
.table { width: 1029px; flex: none; overflow: hidden; border-left: 1px solid #e9e9e9; box-sizing: border-box; }
.row { height: 48px; display: flex; align-items: center; border-bottom: 1px solid #e8e8e8; box-sizing: border-box; padding-left: 11px; font-size: 13.700px; color: #3d4450; white-space: nowrap; }
.row.cut { height: 11px; align-items: flex-start; overflow: hidden; }
.row.hover { background: #f3f3f3; }
.c-id { width: 201px; flex: none; display: flex; align-items: center; gap: 0; }
.stack { display: flex; flex-direction: column; flex: none; position: relative; padding-top: 2px; }
.w-ref { width: 127px; flex: none; }
.w-phone { width: 231px; flex: none; }
.main-t { line-height: 20px; }
.t-ref { font-size: 13.900px; margin: 1px 0 -1px; }
.t-ph { margin: -1px 0 1px; }
.sub { font-size: 11.600px; line-height: 18px; color: #7b838e; margin-top: 1px; }
.peek { display: block; margin-top: -13px; }
.w-date { width: 136px; flex: none; font-size: 13.600px; }
.w-amt { width: 107px; flex: none; font-size: 13.900px; }
.rupee { margin-right: 1px; }
.copy { width: 21px; height: 21px; fill: none; stroke: #3d4450; stroke-width: 1.400; flex: none; }
.copy.over { position: absolute; left: 117px; top: 10px; }
.pill { height: 24px; border-radius: 12px; display: inline-flex; align-items: center; padding: 0 12px 0 8px; gap: 4px; font-size: 11.800px; flex: none; }
.pill.good { background: #e7f4ee; color: #177a4b; }
.pill.bad { background: #fce9e9; color: #c62a33; gap: 6px; padding-left: 9px; }

.main-bar { width: 15px; }
.main-bar .arrow.up { margin-top: 5px; }
.main-bar .thumb { display: block; width: 9px; height: 154px; background: #8a8a8a; border-radius: 5px; margin-top: 307px; flex: none; }
.help { position: absolute; left: 1168px; top: 513px; width: 150px; height: 44px; background: #2e4163; border-radius: 22px; color: #fff; font-size: 12.100px; font-weight: 700; display: flex; align-items: center; justify-content: center; gap: 9px; box-shadow: 0 4px 10px rgba(0, 0, 0, .3); }

/* taskbar */
.taskbar { height: 48px; flex: none; background: #eeeeee; border-top: 1px solid #d4d4d4; box-sizing: border-box; display: flex; align-items: center; font-family: "Open Sans", "Noto Sans", sans-serif; color: #1f1f1f; position: relative; }
.weather { width: 308px; flex: none; display: flex; align-items: center; padding-left: 17px; box-sizing: border-box; gap: 5px; }
.cloud { position: relative; width: 28px; height: 26px; }
.badge { position: absolute; left: 13px; top: -6px; width: 16px; height: 16px; border-radius: 50%; background: #c42b1c; color: #fff; font-size: 11px; text-align: center; line-height: 16px; }
.wtxt { display: flex; flex-direction: column; font-size: 12px; line-height: 17px; letter-spacing: -.1px; padding-bottom: 2px; }
.gray { color: #555; }
.center { display: flex; align-items: center; gap: 20px; flex: none; }
.winlogo { margin-right: -8px; }
.tsearch { width: 218px; height: 30px; border-radius: 15px; background: #fff; border: 1px solid #dcdcdc; display: flex; align-items: center; gap: 9px; padding-left: 10px; box-sizing: border-box; font-size: 13px; color: #444; margin-right: -8px; position: relative; }
.pic { position: absolute; right: 4px; top: 0; }
.ti { width: 24px; height: 24px; flex: none; display: block; }
.task { margin-right: 2px; }
.with-dot { position: relative; display: block; }
.dot { position: absolute; left: 9px; bottom: -9px; width: 6px; height: 3px; border-radius: 2px; background: #8a8a8a; }
.chrome-wrap { width: 38px; height: 40px; margin: 0 -7px; background: #f8f8f8; border-radius: 4px; display: flex; align-items: center; justify-content: center; position: relative; box-shadow: 0 0 1px rgba(0,0,0,.2); }
.active-bar { position: absolute; left: 11px; bottom: 1px; width: 16px; height: 3px; border-radius: 2px; background: #0a6cc4; }
.tray { margin-left: auto; display: flex; align-items: center; padding-right: 19px; flex: none; }
.t-chev { margin-right: 17px; }
.t-one { margin-right: 13px; }
.t-off { margin-right: 14px; }
.t-off + .lang { margin-left: 3px; }
.lang { display: flex; flex-direction: column; align-items: center; font-size: 12px; line-height: 16px; margin-right: 18px; padding-top: 1px; }
.t-wifi { margin-right: 7px; }
.t-snd { margin-right: 7px; }
.t-bat { margin-right: 17px; }
.clock { display: flex; flex-direction: column; align-items: flex-end; font-size: 12px; line-height: 16px; }
</style>
